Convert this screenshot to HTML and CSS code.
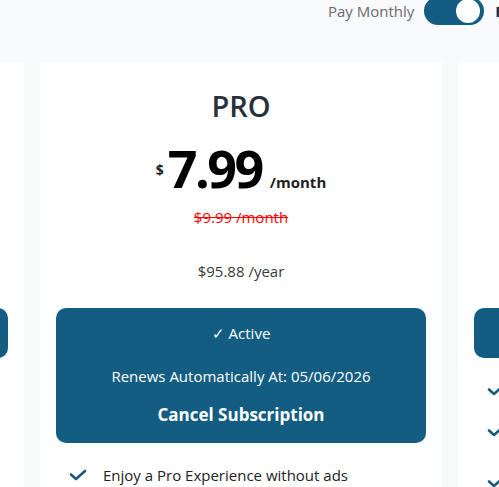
FILE: index.html
```html
<!DOCTYPE html>
<html lang="en">
<head>
<meta charset="utf-8">
<title>Plans</title>
<link rel="stylesheet" href="styles.css">
</head>
<body>
<header class="billing-toggle">
  <span class="billing-label">Pay Monthly</span>
  <span class="switch" role="switch" aria-checked="true"><span class="switch-knob"></span></span>
  <span class="billing-label billing-label-active">Pay Yearly</span>
</header>

<main class="plans">
  <section class="card">
    <h2 class="plan-name">BASIC</h2>
    <div class="price"><span class="currency">$</span><span class="amount">3.99</span><span class="period">/month</span></div>
    <div class="old-price">$4.99 /month</div>
    <div class="year-price">$47.88 /year</div>
    <button class="subscribe-btn">Subscribe</button>
    <ul class="features">
      <li><svg class="check" viewBox="0 0 18 12"><path d="M2 5.5 L7 10 L16 2"/></svg><span>Feature</span></li>
    </ul>
  </section>

  <section class="card">
    <h2 class="plan-name">PRO</h2>
    <div class="price"><span class="currency">$</span><span class="amount">7.99</span><span class="period">/month</span></div>
    <div class="old-price">$9.99 /month</div>
    <div class="year-price">$95.88 /year</div>
    <div class="active-box">
      <div class="active-status">✓ Active</div>
      <div class="renews">Renews Automatically At: 05/06/2026</div>
      <button class="cancel-btn">Cancel Subscription</button>
    </div>
    <ul class="features">
      <li><svg class="check" viewBox="0 0 18 12"><path d="M2 5.5 L7 10 L16 2"/></svg><span>Enjoy a Pro Experience without ads</span></li>
    </ul>
  </section>

  <section class="card">
    <h2 class="plan-name">ULTIMATE</h2>
    <div class="price"><span class="currency">$</span><span class="amount">12.99</span><span class="period">/month</span></div>
    <div class="old-price">$15.99 /month</div>
    <div class="year-price">$155.88 /year</div>
    <button class="subscribe-btn">Subscribe</button>
    <ul class="features">
      <li><svg class="check" viewBox="0 0 18 12"><path d="M2 5.5 L7 10 L16 2"/></svg><span>Everything in Pro</span></li>
      <li class="feature-spaced"><svg class="check" viewBox="0 0 18 12"><path d="M2 5.5 L7 10 L16 2"/></svg><span>Unlimited downloads</span></li>
      <li><svg class="check" viewBox="0 0 18 12"><path d="M2 5.5 L7 10 L16 2"/></svg><span>Priority support</span></li>
    </ul>
  </section>
</main>
</body>
</html>
```

FILE: styles.css
```css
html, body {
  margin: 0;
  padding: 0;
  overflow: hidden;
  height: 100%;
}

body {
  background: #f8fafc;
  font-family: "Open Sans", "Noto Sans", sans-serif;
  color: #222;
}

.billing-toggle {
  display: flex;
  align-items: center;
  height: 22px;
  padding-left: 328px;
  white-space: nowrap;
}

.billing-label {
  font-size: 15px;
  line-height: 20px;
  color: #6b6b6b;
}

.billing-label-active {
  margin-left: 11px;
  color: #1f2937;
  font-weight: 700;
}

.switch {
  flex: none;
  width: 60px;
  height: 28px;
  margin-left: 10px;
  border-radius: 14px;
  background: #135d82;
  display: flex;
  align-items: center;
  justify-content: flex-end;
  padding: 0 4px;
  box-sizing: border-box;
}

.switch-knob {
  width: 24px;
  height: 24px;
  border-radius: 50%;
  background: #fff;
}

.plans {
  display: flex;
  gap: 16px;
  margin-top: 40px;
  margin-left: -378px;
  align-items: stretch;
}

.card {
  flex: none;
  width: 402px;
  min-height: 520px;
  box-sizing: border-box;
  background: #fff;
  padding: 26px 16px 24px;
  text-align: center;
}

.plan-name {
  margin: 0;
  font-size: 29px;
  line-height: 36px;
  font-weight: 600;
  color: #27303b;
}

.price {
  display: flex;
  justify-content: center;
  align-items: baseline;
  margin-top: 14px;
  line-height: 60px;
  color: #000;
  font-weight: 700;
}

.currency {
  align-self: flex-start;
  font-size: 14px;
  line-height: 14px;
  margin-top: 25px;
  margin-right: 4px;
  color: #222;
}

.amount {
  font-size: 52px;
  letter-spacing: -2.5px;
}

.period {
  font-size: 15px;
  margin-left: 8px;
  color: #1f1f1f;
}

.old-price {
  margin-top: -6px;
  font-size: 15px;
  line-height: 22px;
  color: #ff0000;
  text-decoration: line-through;
}

.year-price {
  margin-top: 32px;
  font-size: 15px;
  line-height: 22px;
  color: #3a3a3a;
}

.subscribe-btn,
.active-box {
  display: block;
  width: 100%;
  margin-top: 26px;
  border: none;
  border-radius: 10px;
  background: #135d82;
  color: #fff;
  font-family: inherit;
}

.subscribe-btn {
  height: 50px;
  font-size: 16px;
  font-weight: 700;
}

.active-box {
  padding: 14px 16px 14px;
  box-sizing: border-box;
}

.active-status {
  font-size: 15px;
  line-height: 22px;
}

.renews {
  margin-top: 21px;
  font-size: 15px;
  line-height: 22px;
}

.cancel-btn {
  margin-top: 14px;
  padding: 3px 8px;
  border: none;
  background: transparent;
  color: #fff;
  font-family: inherit;
  font-size: 17px;
  line-height: 22px;
  font-weight: 700;
}

.features {
  list-style: none;
  margin: 21px 0 0;
  padding: 0 0 0 13px;
  text-align: left;
}

.features li {
  display: flex;
  align-items: flex-start;
  gap: 16px;
  font-size: 15px;
  line-height: 22px;
  color: #222;
  margin-bottom: 19px;
}

.features .feature-spaced {
  margin-bottom: 29px;
}

.check {
  flex: none;
  width: 18px;
  height: 12px;
  margin-top: 5px;
}

.check path {
  fill: none;
  stroke: #1a5b7d;
  stroke-width: 2.6;
  stroke-linecap: round;
  stroke-linejoin: round;
}
```
